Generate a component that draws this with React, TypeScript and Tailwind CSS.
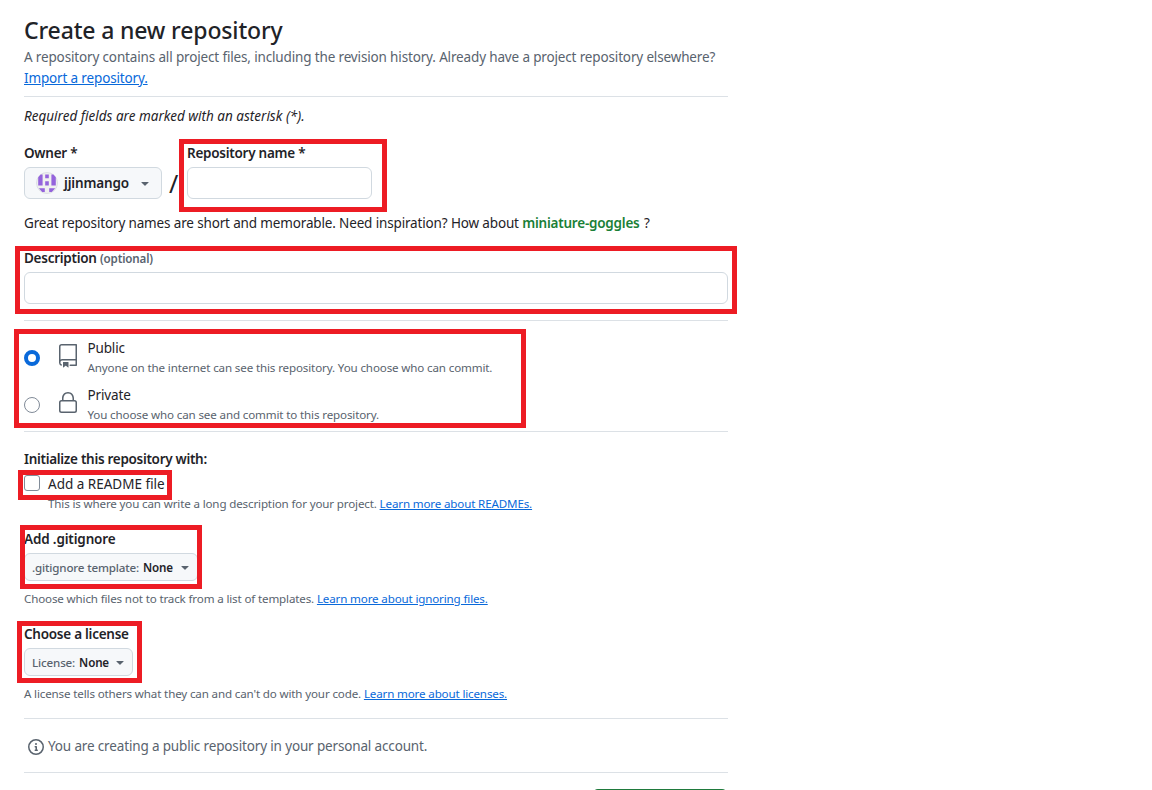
import type { ReactNode } from "react"
import { GoLock, GoRepo } from "react-icons/go"
import { cva } from "class-variance-authority"

const highlights = [
    "left-[179px] top-[139px] w-[208px] h-[73px]",
    "left-[15px] top-[246px] w-[722px] h-[68px]",
    "left-[14px] top-[329px] w-[512px] h-[99px]",
    "left-[18px] top-[470px] w-[154px] h-[30px]",
    "left-[20px] top-[525px] w-[182px] h-[64px]",
    "left-[17px] top-[621px] w-[125px] h-[62px]",
]

const button = cva("flex items-center border border-[#d1d9e0] rounded-md bg-[#f6f8fa] whitespace-nowrap", {
    variants: {
        size: {
            sm: "h-7 pl-[7px] pr-1 text-[11.6px] tracking-[-0.16px]",
            md: "h-8 w-[138px] pl-[11px] text-[13.5px] tracking-[-0.16px]",
        },
    },
})

function Caret() {
    return (
        <svg viewBox="0 0 16 16" className="h-4 w-4 shrink-0 fill-[#59636e]">
            <path d="m4.427 7.427 3.396 3.396a.25.25 0 0 0 .354 0l3.396-3.396A.25.25 0 0 0 11.396 7H4.604a.25.25 0 0 0-.177.427Z" />
        </svg>
    )
}

function InfoIcon() {
    return (
        <svg viewBox="0 0 16 16" className="h-4 w-4 shrink-0 fill-[#59636e]">
            <path d="M0 8a8 8 0 1 1 16 0A8 8 0 0 1 0 8Zm8-6.5a6.5 6.5 0 1 0 0 13 6.5 6.5 0 0 0 0-13ZM6.5 7.75A.75.75 0 0 1 7.25 7h1a.75.75 0 0 1 .75.75v2.75h.25a.75.75 0 0 1 0 1.5h-2a.75.75 0 0 1 0-1.5h.25v-2h-.25a.75.75 0 0 1-.75-.75ZM8 6a1 1 0 1 1 0-2 1 1 0 0 1 0 2Z" />
        </svg>
    )
}

function Avatar() {
    return (
        <svg viewBox="0 0 22 22" className="h-[22px] w-[22px] shrink-0">
            <circle cx="11" cy="11" r="10.5" fill="#f0f0f0" stroke="#dcdfe3" strokeWidth="1" />
            <path
                fill="#9463dc"
                d="M2.2 5.2 4.6 2.6h2v10.800H2.200zM19.800 5.200 17.400 2.600h-2v10.800h4.400zM9.200 2.600h3.600v3.600H9.200zM9.200 9.200h3.600v4.200H9.200zM2.800 16.200h6v3.800H6.200zM19.200 16.200h-6v3.800h2.600z"
            />
        </svg>
    )
}

function Divider() {
    return <div className="h-px w-full bg-[#dce1e6]" />
}

function Link({ children }: { children: ReactNode }) {
    return <a href="#" className="text-[#0969da] underline">{children}</a>
}

interface VisibilityOptionProps {
    icon: ReactNode
    title: string
    description: string
    checked?: boolean
}

function VisibilityOption({ icon, title, description, checked }: VisibilityOptionProps) {
    return (
        <label className="flex h-[47px] items-start">
            <input
                type="radio"
                name="visibility"
                defaultChecked={checked}
                className="mt-3 h-4 w-4 appearance-none rounded-full border border-[#818b98] bg-white checked:border-4 checked:border-[#0969da]"
            />
            <span className="ml-4 mt-1.5 text-[#59636e]">{icon}</span>
            <span className="ml-[7.5px] flex flex-col">
                <span className="h-5 leading-[21px]">{title}</span>
                <span className="text-[11.6px] leading-5 tracking-[-0.14px] text-[#59636e]">{description}</span>
            </span>
        </label>
    )
}

export default function App() {
    return (
        <div className="relative h-[790px] w-[1152px] overflow-hidden bg-white font-['Noto_Sans',sans-serif] text-[13.5px] leading-[21px] tracking-[-0.15px] text-[#1f2328]">
            <main className="ml-6 flex w-[704px] flex-col whitespace-nowrap">
                <h1 className="mt-3 h-[35px] text-[23px] font-medium leading-9 tracking-[-0.15px]">Create a new repository</h1>
                <p className="h-[49px] text-[#59636e]">
                    A repository contains all project files, including the revision history. Already have a project repository elsewhere?
                    <br />
                    <Link>Import a repository.</Link>
                </p>
                <Divider />
                <p className="mt-[9px] h-[37px] italic tracking-normal">Required fields are marked with an asterisk (*).</p>

                <div className="flex h-[70px]">
                    <div className="w-[138px]">
                        <div className="h-6 font-semibold tracking-[-0.26px]">Owner *</div>
                        <button className={button({ size: "md" })}>
                            <Avatar />
                            <span className="ml-[6px] w-[73px] text-left font-semibold">jjinmango</span>
                            <Caret />
                        </button>
                    </div>
                    <span className="w-[25px] pl-[7px] pt-7 text-[25px] leading-6">/</span>
                    <div className="w-[185px]">
                        <div className="h-6 font-semibold tracking-[-0.26px]">Repository name *</div>
                        <input className="h-8 w-full rounded-md border border-[#d1d9e0]" />
                    </div>
                </div>
                <p className="h-[35px]">
                    Great repository names are short and memorable. Need inspiration? How about{" "}
                    <span className="mr-px font-semibold tracking-[-0.22px] text-[#1a7f37]">miniature-goggles</span> ?
                </p>

                <div className="h-6 font-semibold tracking-[-0.26px]">
                    Description <span className="text-[11.6px] tracking-[-0.16px] text-[#59636e]">(optional)</span>
                </div>
                <input className="mb-4 h-8 w-full shrink-0 rounded-md border border-[#d1d9e0]" />
                <Divider />

                <div className="mt-[17px] h-[93px]">
                    <VisibilityOption
                        icon={<GoRepo size={24} />}
                        title="Public"
                        description="Anyone on the internet can see this repository. You choose who can commit."
                        checked
                    />
                    <VisibilityOption
                        icon={<GoLock size={24} />}
                        title="Private"
                        description="You choose who can see and commit to this repository."
                    />
                </div>
                <Divider />

                <h2 className="mt-[17px] h-[25px] font-semibold tracking-[-0.3px]">Initialize this repository with:</h2>
                <label className="flex h-5">
                    <input type="checkbox" className="mt-px h-4 w-4 appearance-none rounded-[3px] border border-[#818b98]" />
                    <span className="ml-2 tracking-normal">Add a README file</span>
                </label>
                <p className="ml-6 h-[35px] text-[11.6px] leading-5 tracking-[-0.15px] text-[#59636e]">
                    This is where you can write a long description for your project. <Link>Learn more about READMEs.</Link>
                </p>

                <h2 className="h-6 font-semibold tracking-[-0.16px]">Add .gitignore</h2>
                <button className={button({ size: "sm", className: "w-[174px]" })}>
                    <span className="font-medium text-[#59636e]">.gitignore template:</span>
                    <span className="ml-1 flex-1 text-left font-semibold">None</span>
                    <Caret />
                </button>
                <p className="mt-2 h-[35px] text-[11.6px] leading-5 tracking-[-0.15px] text-[#59636e]">
                    Choose which files not to track from a list of templates. <Link>Learn more about ignoring files.</Link>
                </p>

                <h2 className="h-6 font-semibold tracking-[-0.26px]">Choose a license</h2>
                <button className={button({ size: "sm", className: "w-[109px]" })}>
                    <span className="font-medium text-[#59636e]">License:</span>
                    <span className="ml-1 flex-1 text-left font-semibold">None</span>
                    <Caret />
                </button>
                <p className="mt-2 h-[34px] text-[11.6px] leading-5 tracking-[-0.15px] text-[#59636e]">
                    A license tells others what they can and can't do with your code. <Link>Learn more about licenses.</Link>
                </p>
                <Divider />

                <div className="flex h-[53px] items-center gap-1 pl-1 pt-[3px] text-[#59636e]">
                    <InfoIcon />
                    <span className="pb-0.5">You are creating a public repository in your personal account.</span>
                </div>
                <Divider />
                <button
                    aria-label="Create repository"
                    className="mt-4 h-8 w-[136px] shrink-0 self-end rounded-md border border-[#1f7a3c] bg-[#1f883d]"
                />
            </main>

            {highlights.map((box) => (
                <div key={box} className={`pointer-events-none absolute border-[5px] border-[#ed1c24] ${box}`} />
            ))}
        </div>
    )
}
